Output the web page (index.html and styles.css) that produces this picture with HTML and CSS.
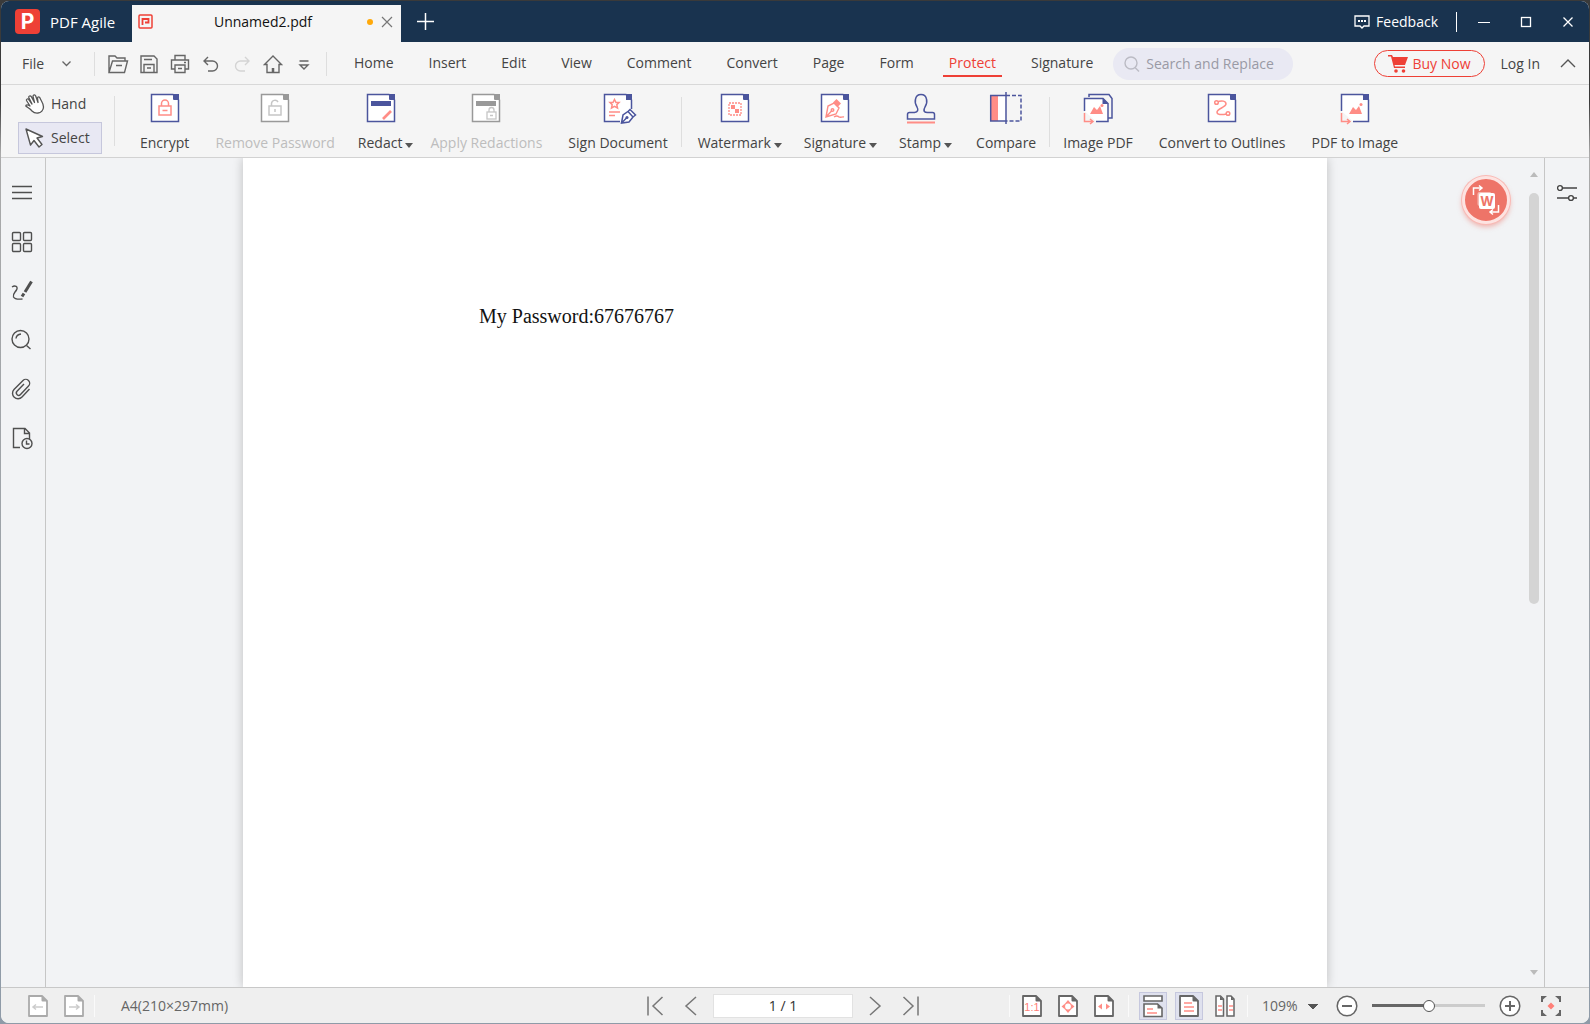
FILE: index.html
```html
<!DOCTYPE html>
<html lang="en">
<head>
    <meta charset="UTF-8">
    <meta name="viewport" content="width=device-width, initial-scale=1.0">
    <title>PDF Agile</title>
    <link rel="stylesheet" href="styles.css">
</head>
<body>
    <!-- shared page shapes -->
    <svg class="defs" width="0" height="0" aria-hidden="true">
        <symbol id="doc" viewBox="0 0 32 32">
            <path d="M2.5 2.5H24L29.500 8V29.500H2.500z" fill="#fff" stroke="currentColor" stroke-width="1.500"/>
            <path d="M24 2h6v6h-5q-1 0-1-1z" fill="currentColor"/>
        </symbol>
        <symbol id="sheet" viewBox="0 0 20 22">
            <path d="M1 1H14L19 6V21H1z" fill="#fff" stroke="currentColor" stroke-width="1.800" stroke-linejoin="round"/>
            <path d="M13.500 1L19 6.500H14.500q-1 0-1-1z" fill="currentColor"/>
        </symbol>
    </svg>

    <div class="window">
        <header class="titlebar">
            <div class="brand">
                <svg width="25" height="25" viewBox="0 0 25 25" aria-hidden="true">
                    <rect width="25" height="25" rx="4" fill="#ee4036"/>
                    <text x="12.500" y="20" text-anchor="middle" class="logo-letter">P</text>
                </svg>
                <span>PDF Agile</span>
            </div>
            <div class="doc-tab">
                <svg width="15" height="15" viewBox="0 0 15 15" fill="none" stroke="#ee4036" aria-hidden="true">
                    <rect x="1" y="1" width="13" height="13" rx="1" stroke-width="1.500"/>
                    <path d="M4.500 11V5H10.500V8.500H7" stroke-width="1.800"/>
                </svg>
                <span class="doc-name">Unnamed2.pdf</span>
                <span class="dot"></span>
                <button class="tab-close" aria-label="Close tab">
                    <svg width="12" height="12" viewBox="0 0 12 12" fill="none" stroke="#777" stroke-width="1.200"><path d="M1 1l10 10M11 1L1 11"/></svg>
                </button>
            </div>
            <button class="new-tab" aria-label="New tab">
                <svg width="17" height="17" viewBox="0 0 17 17" stroke="#fff" stroke-width="1.500"><path d="M8.500 0v17M0 8.500h17"/></svg>
            </button>
            <div class="window-tools">
                <button class="feedback">
                    <svg width="16" height="14" viewBox="0 0 16 14" fill="none" stroke="#fff" stroke-width="1.300" aria-hidden="true">
                        <path d="M1 1h14v10h-5l-2 2-2-2H1z"/><path d="M4 6h2M7 6h2M10 6h2" stroke-width="2"/>
                    </svg>
                    Feedback
                </button>
                <span class="bar"></span>
                <button aria-label="Minimize"><svg width="12" height="12" viewBox="0 0 12 12" stroke="#fff"><path d="M0 6.500h12"/></svg></button>
                <button aria-label="Maximize"><svg width="12" height="12" viewBox="0 0 12 12" fill="none" stroke="#fff" stroke-width="1.300"><rect x="1.500" y="1.500" width="9" height="9"/></svg></button>
                <button aria-label="Close"><svg width="12" height="12" viewBox="0 0 12 12" stroke="#fff" stroke-width="1.300"><path d="M1.500 1.500l9 9M10.500 1.500l-9 9"/></svg></button>
            </div>
        </header>

        <nav class="menubar">
            <button class="file">File
                <svg width="9" height="6" viewBox="0 0 9 6" fill="none" stroke="#666" stroke-width="1.300"><path d="M.5.5l4 4 4-4"/></svg>
            </button>
            <span class="sep"></span>
            <div class="quick">
                <button aria-label="Open"><svg width="20" height="20" viewBox="0 0 20 20"><path d="M1 18.500V2h6l2 2h8v3M1 18.500L4.500 7H19.500l-3 11.500zM8 11.500h6"/></svg></button>
                <button aria-label="Save"><svg width="20" height="20" viewBox="0 0 20 20"><path d="M2 2h13l3 3v13.500H2zM5 18V10.500h10V18M5 5.500h8M8 14h4"/></svg></button>
                <button aria-label="Print"><svg width="20" height="20" viewBox="0 0 20 20"><path d="M5 6V1.500h10V6M5 15H1.500V6H18.500v9H15M5 11h10v7.500H5zM8 14.500h4M14 8.500h2"/></svg></button>
                <button aria-label="Undo"><svg width="20" height="20" viewBox="0 0 20 20"><path d="M7 3L3 7l4 4M3 7h8.500a5 5 0 0 1 0 10H7"/></svg></button>
                <button aria-label="Redo" disabled><svg width="20" height="20" viewBox="0 0 20 20"><path d="M13 3l4 4-4 4M17 7H8.500a5 5 0 0 0 0 10H13"/></svg></button>
                <button aria-label="Home page"><svg width="20" height="20" viewBox="0 0 20 20"><path d="M1.500 10.500L10 2l8.500 8.500H16v8H4v-8z" /><path d="M10 18.500V14" stroke-width="2.500"/></svg></button>
                <button aria-label="Customize"><svg width="20" height="20" viewBox="0 0 20 20"><path d="M5.500 7h9M6 11l4 4 4-4z"/></svg></button>
            </div>
            <span class="sep"></span>
            <div class="tabs">
                <button>Home</button>
                <button>Insert</button>
                <button>Edit</button>
                <button>View</button>
                <button>Comment</button>
                <button>Convert</button>
                <button>Page</button>
                <button>Form</button>
                <button class="active">Protect</button>
                <button>Signature</button>
            </div>
            <label class="search">
                <svg width="16" height="16" viewBox="0 0 16 16" fill="none" stroke="#bbbbc4" stroke-width="1.400"><circle cx="7" cy="7" r="6"/><path d="M11 11.500l4 4"/></svg>
                <input type="text" placeholder="Search and Replace" aria-label="Search and Replace">
            </label>
            <div class="account">
                <button class="buy">
                    <svg width="20" height="18" viewBox="0 0 20 18" fill="#ee4036" aria-hidden="true"><path d="M0 0h4l1 2h15l-3 8H6.500l.5 1.500h10V13H6L3 1.500H0z"/><circle cx="8" cy="16" r="1.800"/><circle cx="15.500" cy="16" r="1.800"/></svg>
                    Buy Now
                </button>
                <button class="login">Log In</button>
                <button aria-label="Collapse ribbon"><svg width="16" height="9" viewBox="0 0 16 9" fill="none" stroke="#555" stroke-width="1.400"><path d="M1 8l7-7 7 7"/></svg></button>
            </div>
        </nav>

        <div class="ribbon">
            <div class="modes">
                <button>
                    <svg width="20" height="20" viewBox="0 0 20 20" fill="#fff" stroke="#555" stroke-width="1.300" stroke-linejoin="round"><path d="M7 17C5 14.500 2.500 13.500.8 12c0-1.500 1.700-1.700 4.200 0L1.500 6.500C1 5 3 4.300 3.800 5.500L7 10 3.800 3.500C3.500 2 5.300 1.300 6.200 2.500L9.500 8.500 8 2.500C8 .7 10 .3 10.700 2L13 8.500 12.500 4c.2-1.500 2-1.500 2.500 0 1 3 3.500 5 3.500 9 0 3-2.500 6-5.500 6-3 .3-4.500-.5-6-2z"/></svg>
                    Hand
                </button>
                <button class="active">
                    <svg width="20" height="20" viewBox="0 0 20 20" fill="#fff" stroke="#555" stroke-width="1.400" stroke-linejoin="round"><path d="M1 1l4.500 16 3.500-4.500 5 6.500 3-2.500-5-6.500 5.500-1.500z"/></svg>
                    Select
                </button>
            </div>
            <span class="sep"></span>
            <div class="tools">
                <button>
                    <svg viewBox="0 0 32 32"><use href="#doc"/><g fill="none" stroke="#ff8d86" stroke-width="1.500"><rect x="10" y="14" width="12" height="9"/><path d="M12.500 14v-2.500a3.500 3.500 0 0 1 7 0V14M13.500 18.500h5"/></g></svg>
                    <span>Encrypt</span>
                </button>
                <button disabled>
                    <svg viewBox="0 0 32 32"><use href="#doc"/><g fill="none" stroke="#c6c6c6" stroke-width="1.500"><rect x="10" y="14" width="12" height="9"/><path d="M12.500 14v-2.500a3.500 3.500 0 0 1 6.500-1.500M16 17v3"/></g></svg>
                    <span>Remove Password</span>
                </button>
                <button class="drop tight">
                    <svg viewBox="0 0 32 32"><use href="#doc"/><path d="M6 9h20v5H6z" fill="#4b559d"/><path d="M18 27l8-8" stroke="#ff8d86" stroke-width="2.600"/></svg>
                    <span>Redact</span>
                </button>
                <button disabled>
                    <svg viewBox="0 0 32 32"><use href="#doc"/><path d="M6 9h20v5H6z" fill="#999"/><g fill="#fff" stroke="#c6c6c6" stroke-width="1.300"><path d="M19 20v-2a2.500 2.500 0 0 1 5 0v2"/><rect x="17" y="20" width="9" height="7"/><path d="M20 23.500h3"/></g></svg>
                    <span>Apply Redactions</span>
                </button>
                <button>
                    <svg viewBox="0 0 32 32"><path d="M18 29.500H2.500v-27H24L29.500 8v9" fill="#fff" stroke="currentColor" stroke-width="1.500"/><path d="M24 2h6v6h-6z" fill="currentColor"/><g fill="none" stroke="#ff8d86" stroke-width="1.500"><path d="M12.500 7.500l1.500 3h3l-2.200 2.200.7 3.300-3-1.700-3 1.700.7-3.300L8 10.500h3zM7 20h11M7 23.500h6"/></g><path d="M19.500 31l1.500-8 5-3.500 5 5.500-4 5zM26 19.500l2-2 5.500 5.500-2.500 2M20 30.500l4.500-4.500" fill="#fff" stroke="currentColor" stroke-width="1.500"/><circle cx="25" cy="25.500" r="1.500" fill="currentColor"/></svg>
                    <span>Sign Document</span>
                </button>
                <span class="sep"></span>
                <button class="drop">
                    <svg viewBox="0 0 32 32"><use href="#doc"/><rect x="10" y="11" width="12" height="12" fill="none" stroke="#ff8d86" stroke-width="1.300" stroke-dasharray="2 1"/><path d="M12 13h4v4h4v4h-4v-4h-4z" fill="#ff8d86"/></svg>
                    <span>Watermark</span>
                </button>
                <button class="drop">
                    <svg viewBox="0 0 32 32"><use href="#doc"/><g fill="none" stroke="#ff8d86" stroke-width="1.400"><path d="M7 25l2-11 6-3 5 5-3 6zM7 25l6-6.500M15 25c3-2 4-1 5 0 1.500 1 3-.5 5 0"/><circle cx="13.500" cy="18" r="1.300"/></g><path d="M14 10.500L17.500 7l4.500 4.500-3.500 3.500z" fill="#ff8d86"/></svg>
                    <span>Signature</span>
                </button>
                <button class="drop">
                    <svg viewBox="0 0 32 32" fill="none"><path d="M2.500 27v-4.500q0-2 2-2h5q5-1 2.500-5.500C10 12 10 9 10.500 7a5.600 5.600 0 0 1 11 0c.5 2 .5 5-1.500 8-2.500 4.500 0 5.500 2.500 5.500h5q2 0 2 2V27z" stroke="currentColor" stroke-width="1.500"/><path d="M2 30.500h28" stroke="#ff8d86" stroke-width="2"/></svg>
                    <span>Stamp</span>
                </button>
                <button>
                    <svg viewBox="0 0 32 32"><path d="M.700 4h15v25h-15z" fill="#fff"/><path d="M1 4h7v25H1z" fill="#ff8d86"/><path d="M16 3.500H.700v25.500H16" fill="none" stroke="currentColor" stroke-width="1.500"/><path d="M16 3.500h15v25.500H16" fill="none" stroke="currentColor" stroke-width="1.500" stroke-dasharray="4 2"/><path d="M16 0v32" stroke="currentColor" stroke-width="1.500"/></svg>
                    <span>Compare</span>
                </button>
                <span class="sep"></span>
                <button>
                    <svg viewBox="0 0 32 32"><path d="M7 5V2.500h20l3 4V26h-4" fill="none" stroke="currentColor" stroke-width="1.500"/><path d="M2.500 19V6.500H21l5 5v18H14" fill="#fff" stroke="currentColor" stroke-width="1.500"/><path d="M20.500 6l6 6h-6z" fill="currentColor"/><path d="M8 22l4-7 3 3 3-4 3 8z" fill="#ff8d86"/><circle cx="20" cy="13.500" r="1.500" fill="#ff8d86"/><path d="M2.500 21v8.500H10M8 27l3 2.500-3 2.500" fill="none" stroke="#ff8d86" stroke-width="1.500"/></svg>
                    <span>Image PDF</span>
                </button>
                <button>
                    <svg viewBox="0 0 32 32"><use href="#doc"/><g fill="#fff" stroke="#ff8d86" stroke-width="1.500"><path d="M11 10c5-2 9-1 9 2s-9 5-9 8 4 3 10 2" fill="none"/><circle cx="10.500" cy="10.500" r="1.800"/><circle cx="22" cy="21.500" r="1.800"/></g></svg>
                    <span>Convert to Outlines</span>
                </button>
                <button>
                    <svg viewBox="0 0 32 32"><path d="M2.500 19V2.500H24L29.500 8v21.500H14" fill="#fff" stroke="currentColor" stroke-width="1.500"/><path d="M24 2h6v6h-6z" fill="currentColor"/><path d="M10 22l4-7 3 3 3-4 3 8z" fill="#ff8d86"/><circle cx="22" cy="12.500" r="1.500" fill="#ff8d86"/><path d="M2.500 21v8.500H10M8 27l3 2.500-3 2.500" fill="none" stroke="#ff8d86" stroke-width="1.500"/></svg>
                    <span>PDF to Image</span>
                </button>
            </div>
        </div>

        <main class="workspace">
            <aside class="side">
                <button aria-label="Menu"><svg width="22" height="22" viewBox="0 0 22 22"><path d="M1 4.500h20M1 10.500h20M1 16.500h20"/></svg></button>
                <button aria-label="Thumbnails"><svg width="22" height="22" viewBox="0 0 22 22"><rect x="1.500" y="1.500" width="8" height="8" rx="1"/><rect x="12.500" y="1.500" width="8" height="8" rx="1"/><rect x="1.500" y="12.500" width="8" height="8" rx="1"/><rect x="12.500" y="12.500" width="8" height="8" rx="1"/></svg></button>
                <button aria-label="Annotations"><svg width="22" height="22" viewBox="0 0 22 22"><path d="M1 7c3-2 6.500-.5 4.500 3-2 3-4 4-3 7 1 2 4 2.500 9 2"/><path d="M20.500 1.500L14 12" stroke-width="3"/><path d="M13 13.500L11 16.500" stroke-width="3"/></svg></button>
                <button aria-label="Search"><svg width="22" height="22" viewBox="0 0 22 22"><circle cx="9.500" cy="10" r="8.500"/><path d="M15.500 16.500l4 3.500M5 9.500q.5-4 5-4.500"/></svg></button>
                <button aria-label="Attachments"><svg width="22" height="22" viewBox="0 0 22 22"><path d="M18.500 11l-7.500 8a5.300 5.300 0 0 1-8-7.500l9-9a3.800 3.800 0 0 1 5.500 5.500l-8 8.500a2.300 2.300 0 0 1-3.500-3.200l7-7.300"/></svg></button>
                <button aria-label="History"><svg width="22" height="22" viewBox="0 0 22 22"><path d="M9 20.500H2.500v-19H14L18.500 6v6M13.500 1.500V6.500h5"/><circle cx="16" cy="16.500" r="5"/><path d="M15.500 13.500v3.500h3"/></svg></button>
            </aside>
            <section class="viewer">
                <article class="page">
                    <p>My Password:67676767</p>
                </article>
                <div class="scrollbar">
                    <span class="up"></span>
                    <div class="track"><div class="thumb"></div></div>
                    <span class="down"></span>
                </div>
                <button class="to-word" aria-label="Convert to Word">
                    <svg width="28" height="30" viewBox="0 0 28 30" fill="none" stroke="#fff" stroke-width="1.500">
                        <path d="M1.500 10V3H9M7 .5L10 3 7 5.500M26.500 20v7H19M21 24.500L18 27l3 2.500"/>
                        <rect x="5.500" y="7" width="14" height="14" rx="2" fill="#fff" fill-opacity=".5" stroke="none"/>
                        <rect x="7" y="8" width="16" height="16" rx="2" fill="#fff" stroke="none"/>
                        <text x="15" y="21" text-anchor="middle" class="word-letter">W</text>
                    </svg>
                </button>
            </section>
            <aside class="props">
                <button aria-label="Properties"><svg width="20" height="18" viewBox="0 0 20 18" fill="#fff" stroke="#444" stroke-width="1.400"><path d="M5.500 4H20M0 14h11.500M17 14h3"/><circle cx="3" cy="4" r="2.400"/><circle cx="14" cy="14" r="2.400"/></svg></button>
            </aside>
        </main>

        <footer class="statusbar">
            <div class="status-left">
                <button class="muted" aria-label="Previous view"><svg width="20" height="22" viewBox="0 0 20 22"><use href="#sheet"/><path d="M5 12h10M8 9.500L5 12l3 2.500" fill="none" stroke="#ccc" stroke-width="1.500"/></svg></button>
                <button class="muted" aria-label="Next view"><svg width="20" height="22" viewBox="0 0 20 22"><use href="#sheet"/><path d="M5 12h10M12 9.500l3 2.500-3 2.500" fill="none" stroke="#ccc" stroke-width="1.500"/></svg></button>
                <span class="sep"></span>
                <span class="paper">A4(210×297mm)</span>
            </div>
            <div class="pager">
                <button aria-label="First page"><svg width="16" height="20" viewBox="0 0 16 20"><path d="M1 .5v19M15.500 1L6 10l9.500 9"/></svg></button>
                <button aria-label="Previous page"><svg width="16" height="20" viewBox="0 0 16 20"><path d="M13 1L3 10l10 9"/></svg></button>
                <input type="text" value="1 / 1" aria-label="Page number">
                <button aria-label="Next page"><svg width="16" height="20" viewBox="0 0 16 20"><path d="M3 1l10 9-10 9"/></svg></button>
                <button aria-label="Last page"><svg width="16" height="20" viewBox="0 0 16 20"><path d="M15 .5v19M.5 1L10 10 .5 19"/></svg></button>
            </div>
            <div class="status-right">
                <span class="sep"></span>
                <button aria-label="Actual size"><svg width="20" height="22" viewBox="0 0 20 22"><use href="#sheet"/><text x="10" y="16" text-anchor="middle" class="ratio">1:1</text></svg></button>
                <button aria-label="Fit page"><svg width="20" height="22" viewBox="0 0 20 22"><use href="#sheet"/><circle cx="10" cy="11.500" r="3.500" fill="none" stroke="#ff8d86" stroke-width="1.200"/><path d="M10 5l2.500 3h-5zM10 18l2.500-3h-5zM3.500 11.500l3-2.500v5zM16.500 11.500l-3-2.500v5z" fill="#ff8d86"/></svg></button>
                <button aria-label="Fit width"><svg width="20" height="22" viewBox="0 0 20 22"><use href="#sheet"/><path d="M4 11.500L8 8.500v6zM16 11.500l-4-3v6z" fill="#ff8d86"/></svg></button>
                <span class="sep wide"></span>
                <button class="on" aria-label="Continuous scroll"><svg width="20" height="22" viewBox="0 0 20 22" fill="#fff" stroke="currentColor" stroke-width="1.600"><path d="M1 1h18v5H1zM1 21.500V9h13.500l4.500 4v8.500z"/><path d="M14.500 8.500l5 5h-5z" fill="currentColor" stroke="none"/><path d="M4 14h6M4 18h10" stroke="#ff8d86"/></svg></button>
                <button class="on" aria-label="Single page"><svg width="20" height="22" viewBox="0 0 20 22"><use href="#sheet"/><path d="M5 8h8M5 12h10M5 16h10" stroke="#ff8d86" stroke-width="1.500"/></svg></button>
                <button aria-label="Two pages"><svg width="20" height="22" viewBox="0 0 20 22" fill="#fff" stroke="currentColor" stroke-width="1.500"><path d="M1 1h4.500l3 3v17H1zM12 1h4l3 3v17h-7z"/><path d="M5 1l3.500 4H5zM16 1l3 4h-3z" fill="currentColor" stroke="none"/><path d="M3 11h4M3 15h4M14 11h4M14 15h4" stroke="#ff8d86"/></svg></button>
                <span class="sep"></span>
                <select class="zoom" aria-label="Zoom level"><option>109%</option></select>
                <button aria-label="Zoom out"><svg width="22" height="22" viewBox="0 0 22 22" fill="#fff" stroke="currentColor" stroke-width="1.500"><circle cx="11" cy="11" r="9.800"/><path d="M6 11h10" stroke-width="2"/></svg></button>
                <input type="range" min="0" max="100" value="50" aria-label="Zoom">
                <button class="zoom-in" aria-label="Zoom in"><svg width="22" height="22" viewBox="0 0 22 22" fill="#fff" stroke="currentColor" stroke-width="1.500"><circle cx="11" cy="11" r="9.800"/><path d="M6 11h10M11 6v10" stroke-width="2"/></svg></button>
                <button aria-label="Full screen"><svg width="20" height="20" viewBox="0 0 20 20" fill="currentColor"><path d="M0 0h6L2 3.500V6L0 6zM20 0h-6l4 3.500V6h2zM0 20h6l-4-3.500V14H0zM20 20h-6l4-3.500V14h2z"/><path d="M10 6.500l3.500 3.500-3.500 3.500L6.500 10z" fill="#ff8078"/></svg></button>
            </div>
        </footer>
    </div>
</body>
</html>
```
FILE: styles.css
```css
* {
    margin: 0;
    padding: 0;
    box-sizing: border-box;
}

body {
    font-family: "Segoe UI", "Open Sans", sans-serif;
    font-size: 14px;
    line-height: 20px;
    color: #444;
    background: linear-gradient(#3a3a3a 10%, #aaa 15%, #8f9ba8);
    padding: 1px;
    height: 100vh;
    overflow: hidden;
}

button,
input,
select {
    font: inherit;
    color: inherit;
    background: none;
    border: none;
    outline: none;
}

button {
    display: flex;
    align-items: center;
    justify-content: center;
    white-space: nowrap;
    cursor: pointer;
}

svg {
    flex: none;
    overflow: visible;
}

.defs {
    position: absolute;
}

.window {
    display: flex;
    flex-direction: column;
    height: 100%;
    border-radius: 8px;
    overflow: hidden;
    background: #f5f5f5;
}

.sep {
    width: 1px;
    flex: none;
    background: #dedede;
}

/* title bar */
.titlebar {
    display: flex;
    height: 41px;
    background: #19334f;
    color: #fff;
}

.brand {
    display: flex;
    align-items: center;
    gap: 10px;
    width: 131px;
    padding-left: 14px;
    font-size: 15px;
}

.logo-letter {
    font: bold 21px "Inter", sans-serif;
    fill: #fff;
}

.doc-tab {
    display: flex;
    align-items: center;
    width: 269px;
    margin-top: 4px;
    padding: 0 8px 4px 6px;
    background: #f5f5f5;
    color: #111;
}

.doc-name {
    flex: 1;
    text-align: center;
    padding-left: 6px;
}

.dot {
    width: 6px;
    height: 6px;
    border-radius: 50%;
    background: #ffa90a;
    margin-right: 8px;
}

.new-tab {
    width: 49px;
}

.window-tools {
    display: flex;
    align-items: center;
    margin-left: auto;
}

.window-tools button {
    width: 42px;
    height: 40px;
}

.window-tools .feedback {
    width: auto;
    gap: 6px;
    margin-right: 18px;
}

.bar {
    width: 1px;
    height: 20px;
    background: #fff;
    margin-right: 6px;
}

/* menu row */
.menubar {
    display: flex;
    align-items: center;
    height: 43px;
    padding-top: 1px;
    border-bottom: 1px solid #d8d8d8;
}

.menubar .sep {
    height: 24px;
}

.file {
    gap: 18px;
    width: 93px;
    padding-right: 2px;
}

.quick {
    display: flex;
    padding: 0 7px;
}

.quick button {
    width: 31px;
    height: 30px;
}

.quick svg {
    fill: none;
    stroke: #666;
    stroke-width: 1.4;
}

.quick button:disabled svg {
    stroke: #d4d4d4;
}

.tabs {
    display: flex;
    gap: 23px;
    margin-left: 21px;
}

.tabs button {
    height: 26px;
    padding: 0 6px;
    border-bottom: 2px solid transparent;
}

.tabs .active {
    color: #ee4036;
    border-color: #ee4036;
}

.search {
    display: flex;
    align-items: center;
    gap: 6px;
    width: 180px;
    height: 32px;
    margin-left: 14px;
    padding-left: 11px;
    border-radius: 16px;
    background: #e9e9f3;
}

.search input {
    width: 140px;
}

.search input::placeholder {
    color: #999aa5;
    opacity: 1;
}

.account {
    display: flex;
    align-items: center;
    gap: 16px;
    margin-left: auto;
    padding-right: 13px;
}

.buy {
    gap: 4px;
    height: 27px;
    padding: 0 13px;
    border: 1px solid #ee4036;
    border-radius: 14px;
    color: #ee4036;
}

.login {
    margin-right: 4px;
}

/* ribbon */
.ribbon {
    display: flex;
    align-items: center;
    height: 73px;
    border-bottom: 1px solid #d2d2d2;
}

.ribbon .sep {
    height: 50px;
}

.modes {
    display: flex;
    flex-direction: column;
    gap: 2px;
    margin: 0 12px 0 17px;
}

.modes button {
    justify-content: flex-start;
    gap: 6px;
    width: 84px;
    height: 32px;
    padding-left: 6px;
    border: 1px solid transparent;
}

.modes .active {
    background: #e8e8f3;
    border-color: #c6c7dc;
}

.tools {
    display: flex;
    align-items: center;
    margin-left: 12px;
    padding-top: 2px;
}

.tools button {
    flex-direction: column;
    gap: 9px;
    padding: 0 13px;
    color: #4b559d;
}

.tools svg {
    width: 32px;
    height: 32px;
}

.tools span {
    color: #444;
}

.tools button:disabled {
    color: #999;
}

.tools button:disabled span {
    color: #bdbdbd;
}

.tools .drop {
    padding: 0 11px;
}

.tools .tight {
    padding: 0 4px 0 10px;
}

.tools .sep + .drop {
    margin-left: 5px;
}

.drop span::after {
    content: "";
    display: inline-block;
    margin-left: 3px;
    border: 4px solid transparent;
    border-top: 5px solid #555;
    border-bottom: 0;
}

.drop svg {
    margin-right: 10px;
}

/* document area */
.workspace {
    display: flex;
    flex: 1;
    min-height: 0;
    background: #f2f3f5;
}

.side {
    width: 45px;
    padding-top: 10px;
    border-right: 1px solid #c6c6c6;
}

.side button {
    width: 42px;
    height: 49px;
}

.side svg {
    fill: none;
    stroke: #4f4f4f;
    stroke-width: 1.4;
}

.viewer {
    position: relative;
    display: flex;
    flex: 1;
    overflow: hidden;
}

.page {
    width: 1084px;
    margin: 0 auto;
    padding: 146px 236px;
    background: #fff;
    box-shadow: 0 0 10px rgba(0, 0, 0, 0.22);
    font: 20px/24px "Liberation Serif", serif;
    color: #111;
}

.scrollbar {
    display: flex;
    flex-direction: column;
    align-items: center;
    width: 20px;
    padding: 14px 0 12px;
}

.track {
    flex: 1;
    margin: 16px 0;
}

.thumb {
    width: 10px;
    height: 54%;
    border-radius: 5px;
    background: #d4d4d4;
}

.up,
.down {
    border: 4px solid transparent;
}

.up {
    border-bottom: 5px solid #bbb;
    border-top: 0;
}

.down {
    border-top: 5px solid #bbb;
    border-bottom: 0;
}

.to-word {
    position: absolute;
    top: 18px;
    right: 34px;
    width: 48px;
    height: 48px;
    border: 3px solid #fde3e1;
    border-radius: 50%;
    background: #ee7468;
    box-shadow: 0 0 0 1px #f9b9b4, 0 3px 5px rgba(238, 116, 104, 0.5);
}

.word-letter {
    font: bold 13px "Inter", sans-serif;
    fill: #ee7468;
    stroke: none;
}

.props {
    width: 45px;
    padding-top: 12px;
    border-left: 1px solid #c6c6c6;
}

.props button {
    width: 43px;
    height: 46px;
}

/* status bar */
.statusbar {
    display: grid;
    grid-template-columns: 1fr auto 1fr;
    align-items: center;
    height: 36px;
    border-top: 1px solid #c8c8c8;
    background: #efefef;
    color: #666;
}

.statusbar .sep {
    height: 22px;
    background: #fafafa;
}

.status-left,
.status-right,
.pager {
    display: flex;
    align-items: center;
}

.status-left {
    padding-left: 19px;
}

.statusbar button {
    width: 36px;
    height: 28px;
}

.statusbar .muted {
    color: #aaa;
}

.status-left .sep {
    margin: 0 26px 0 2px;
}

.pager {
    padding-right: 24px;
}

.pager svg {
    fill: none;
    stroke: #777;
    stroke-width: 1.5;
}

.pager input {
    width: 140px;
    height: 24px;
    margin: 0 4px;
    border: 1px solid #e2e2e2;
    background: #fff;
    color: #333;
    text-align: center;
}

.status-right {
    justify-content: flex-end;
    padding-right: 20px;
}

.status-right .sep {
    margin: 0 4px;
}

.status-right .wide {
    margin: 0 6px;
}

.statusbar .on {
    width: 28px;
    margin: 0 4px;
    border: 1px solid #c6c8de;
    background: #dfe1ee;
}

.ratio {
    font: 11px "Liberation Sans", sans-serif;
    fill: #ff8078;
}

.zoom {
    appearance: none;
    width: 56px;
    margin: 0 11px 0 10px;
    background: linear-gradient(to bottom right, #555 50%, transparent 51%) right 0 top 8px / 5px 5px no-repeat,
        linear-gradient(to bottom left, #555 50%, transparent 51%) right 5px top 8px / 5px 5px no-repeat;
}

input[type="range"] {
    appearance: none;
    width: 113px;
    height: 14px;
    margin: 0 7px;
    background: linear-gradient(90deg, #666 50%, #ccc 50%) center / 100% 3px no-repeat;
}

input[type="range"]::-webkit-slider-thumb {
    appearance: none;
    width: 12px;
    height: 12px;
    border: 1px solid #555;
    border-radius: 50%;
    background: #fff;
}

.statusbar .zoom-in {
    margin-right: 5px;
}
```
